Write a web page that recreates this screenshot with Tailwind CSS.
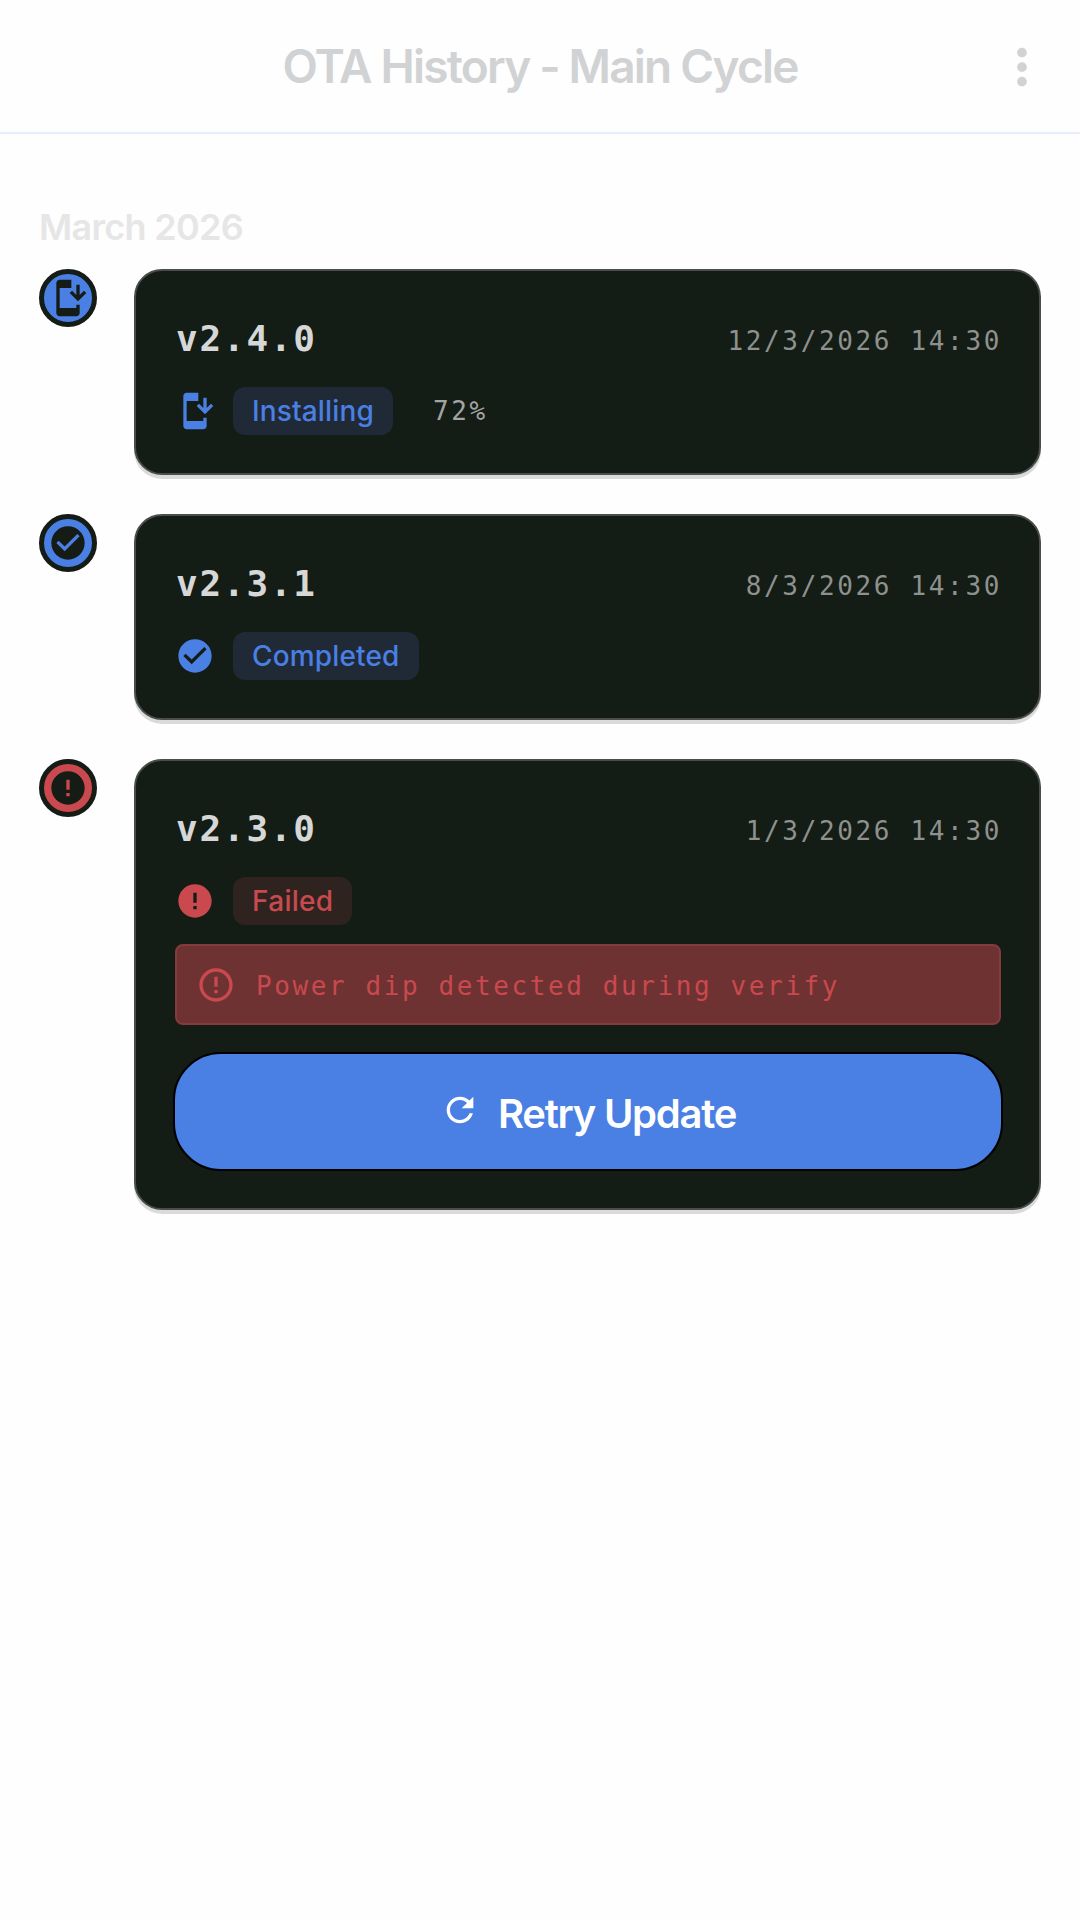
<!DOCTYPE html>
<html><head><meta charset="utf-8"><script src="https://cdn.jsdelivr.net/npm/@tailwindcss/browser@4"></script></head>
<body class="bg-[#fefefe] font-['Inter',sans-serif]">
<div class="w-[1080px] h-[1920px] overflow-hidden">
<header class="relative h-[134px] border-b-2 border-[#e6eefb] flex items-center justify-center">
<h1 class="text-[46px] font-semibold tracking-[-1.8px] text-[#d1d2d3]">OTA History - Main Cycle</h1>
<svg class="absolute right-[29px] top-[38px] w-[58px] h-[58px] fill-[#d1d2d3]" viewBox="0 0 24 24"><path d="M12 8c1.100 0 2-.9 2-2s-.9-2-2-2-2 .9-2 2 .9 2 2 2zm0 2c-1.100 0-2 .9-2 2s.9 2 2 2 2-.9 2-2-.9-2-2-2zm0 6c-1.100 0-2 .9-2 2s.9 2 2 2 2-.9 2-2-.9-2-2-2z"/></svg>
</header>
<main class="pl-[39px] pr-[39px] pt-[78px]">
<h2 class="text-[36px] leading-[30px] font-semibold tracking-[-0.7px] text-[#e6e6e6] mb-[27px]">March 2026</h2>
<div class="flex flex-col gap-[39px]">

<div class="flex gap-[37px] items-start">
<div class="w-[58px] h-[58px] rounded-full bg-[#4a7fe3] border-[5px] border-[#141c15] flex items-center justify-center shrink-0">
<svg class="w-[40px] h-[40px] fill-[#141c15]" viewBox="0 0 24 24"><path d="M17 18H7V6h7V1H7C5.900 1 5 1.900 5 3v18c0 1.100.9 2 2 2h10c1.100 0 2-.9 2-2v-5h-2v2zm1-4 5-5-1.410-1.410L19 10.170V4h-2v6.170l-2.590-2.580L13 9l5 5z"/></svg>
</div>
<div class="flex-1 h-[206px] rounded-[28px] bg-[#131c15] border-2 border-[#4a4d4a] shadow-[0_4px_0_rgba(0,0,0,0.14)] pl-[40px] pr-[39px] pt-[46px]">
<div class="flex items-center justify-between h-[44px]">
<span class="font-['DejaVu_Sans_Mono',monospace] font-bold text-[36px] tracking-[1.800px] text-[#d6d7d7]">v2.4.0</span>
<span class="font-['DejaVu_Sans_Mono',monospace] text-[26px] tracking-[2.650px] text-[#8f918f] -mr-[2px] pt-[4px]">12/3/2026 14:30</span>
</div>
<div class="flex items-center mt-[26px]">
<svg class="w-[40px] h-[40px] -ml-[1px] fill-[#4a7fe3] shrink-0" viewBox="0 0 24 24"><path d="M17 18H7V6h7V1H7C5.900 1 5 1.900 5 3v18c0 1.100.9 2 2 2h10c1.100 0 2-.9 2-2v-5h-2v2zm1-4 5-5-1.410-1.410L19 10.170V4h-2v6.170l-2.590-2.580L13 9l5 5z"/></svg>
<span class="ml-[18px] h-[48px] px-[19px] rounded-[12px] bg-[#1f2a36] text-[#4a7fe3] text-[28px] tracking-[0.15px] font-medium flex items-center">Installing</span>
<span class="ml-[40px] font-['DejaVu_Sans_Mono',monospace] text-[26px] text-[#a3a5a3] tracking-[2.650px]">72%</span>
</div>
</div>
</div>

<div class="flex gap-[37px] items-start">
<div class="w-[58px] h-[58px] rounded-full bg-[#4a7fe3] border-[5px] border-[#141c15] flex items-center justify-center shrink-0">
<svg class="w-[40px] h-[40px] fill-[#141c15]" viewBox="0 0 24 24"><path d="M12 2C6.480 2 2 6.480 2 12s4.480 10 10 10 10-4.480 10-10S17.520 2 12 2zm-2 15-5-5 1.410-1.410L10 14.170l7.590-7.590L19 8l-9 9z"/></svg>
</div>
<div class="flex-1 h-[206px] rounded-[28px] bg-[#131c15] border-2 border-[#4a4d4a] shadow-[0_4px_0_rgba(0,0,0,0.14)] pl-[40px] pr-[39px] pt-[46px]">
<div class="flex items-center justify-between h-[44px]">
<span class="font-['DejaVu_Sans_Mono',monospace] font-bold text-[36px] tracking-[1.800px] text-[#d6d7d7]">v2.3.1</span>
<span class="font-['DejaVu_Sans_Mono',monospace] text-[26px] tracking-[2.650px] text-[#8f918f] -mr-[2px] pt-[4px]">8/3/2026 14:30</span>
</div>
<div class="flex items-center mt-[26px]">
<svg class="w-[40px] h-[40px] -ml-[1px] fill-[#4a7fe3] shrink-0" viewBox="0 0 24 24"><path d="M12 2C6.480 2 2 6.480 2 12s4.480 10 10 10 10-4.480 10-10S17.520 2 12 2zm-2 15-5-5 1.410-1.410L10 14.170l7.590-7.590L19 8l-9 9z"/></svg>
<span class="ml-[18px] h-[48px] px-[19px] rounded-[12px] bg-[#1f2a36] text-[#4a7fe3] text-[28px] tracking-[0.15px] font-medium flex items-center">Completed</span>
</div>
</div>
</div>

<div class="flex gap-[37px] items-start">
<div class="w-[58px] h-[58px] rounded-full bg-[#c9494e] border-[5px] border-[#141c15] flex items-center justify-center shrink-0">
<svg class="w-[40px] h-[40px] fill-[#141c15]" viewBox="0 0 24 24"><path d="M12 2C6.480 2 2 6.480 2 12s4.480 10 10 10 10-4.480 10-10S17.520 2 12 2zm1 15h-2v-2h2v2zm0-4h-2V7h2v6z"/></svg>
</div>
<div class="flex-1 h-[451px] rounded-[28px] bg-[#131c15] border-2 border-[#4a4d4a] shadow-[0_4px_0_rgba(0,0,0,0.14)] pl-[40px] pr-[39px] pt-[46px]">
<div class="flex items-center justify-between h-[44px]">
<span class="font-['DejaVu_Sans_Mono',monospace] font-bold text-[36px] tracking-[1.800px] text-[#d6d7d7]">v2.3.0</span>
<span class="font-['DejaVu_Sans_Mono',monospace] text-[26px] tracking-[2.650px] text-[#8f918f] -mr-[2px] pt-[4px]">1/3/2026 14:30</span>
</div>
<div class="flex items-center mt-[26px]">
<svg class="w-[40px] h-[40px] -ml-[1px] fill-[#c9494e] shrink-0" viewBox="0 0 24 24"><path d="M12 2C6.480 2 2 6.480 2 12s4.480 10 10 10 10-4.480 10-10S17.520 2 12 2zm1 15h-2v-2h2v2zm0-4h-2V7h2v6z"/></svg>
<span class="ml-[18px] h-[48px] px-[19px] rounded-[12px] bg-[#2f2320] text-[#c9494e] text-[28px] tracking-[0.3px] font-medium flex items-center">Failed</span>
</div>
<div class="mt-[19px] -mx-[1px] h-[81px] rounded-[8px] bg-[#6f3232] border-2 border-[#853b3c] flex items-center pl-[19px] gap-[20px]">
<svg class="w-[40px] h-[40px] fill-[#c9494e] shrink-0" viewBox="0 0 24 24"><path d="M11 15h2v2h-2zm0-8h2v6h-2zm.99-5C6.470 2 2 6.480 2 12s4.470 10 9.990 10C17.520 22 22 17.520 22 12S17.520 2 11.990 2zM12 20c-4.420 0-8-3.580-8-8s3.580-8 8-8 8 3.580 8 8-3.580 8-8 8z"/></svg>
<span class="font-['DejaVu_Sans_Mono',monospace] text-[26px] tracking-[2.600px] text-[#c9494e] pt-[3px]">Power dip detected during verify</span>
</div>
<div class="mt-[27px] -mx-[3px] h-[119px] rounded-[48px] bg-[#4a7fe3] border-2 border-black flex items-center justify-center gap-[18px]">
<svg class="w-[40px] h-[40px] fill-white -mt-[3px]" viewBox="0 0 24 24"><path d="M17.650 6.350C16.200 4.900 14.210 4 12 4c-4.420 0-7.990 3.580-7.990 8s3.570 8 7.990 8c3.730 0 6.840-2.550 7.730-6h-2.080c-.82 2.330-3.040 4-5.650 4-3.310 0-6-2.690-6-6s2.690-6 6-6c1.660 0 3.140.69 4.220 1.780L13 11h7V4l-2.350 2.350z"/></svg>
<span class="text-[40px] font-semibold tracking-[-1.250px] text-white pt-[4px]">Retry Update</span>
</div>
</div>
</div>

</div>
</main>
</div>
</body></html>
